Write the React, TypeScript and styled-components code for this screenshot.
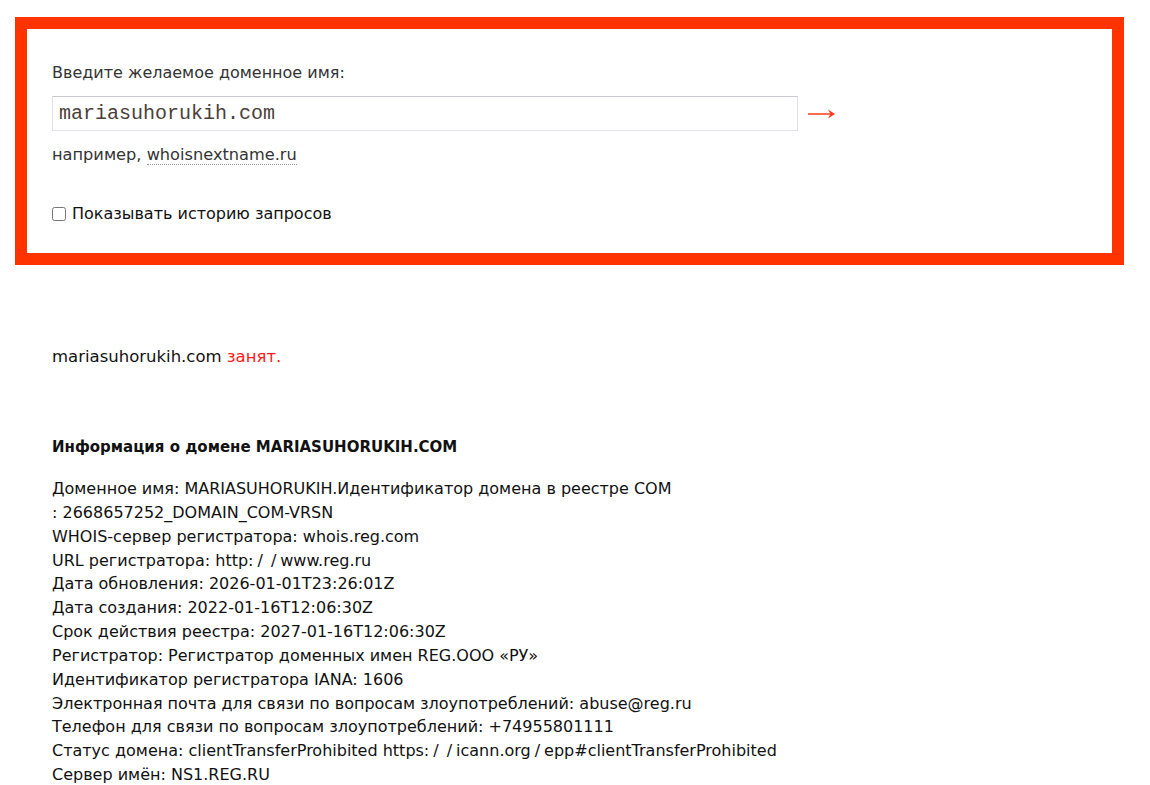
import React from "react";
import styled, { createGlobalStyle } from "styled-components";

const Global = createGlobalStyle`
  html, body { margin: 0; padding: 0; background: #fff; }
  body { font-family: "DejaVu Sans", Verdana, sans-serif; color: #1a1a1a; }
`;

const Page = styled.div`
  padding: 17px 26px 0 15px;
`;

const SearchBox = styled.form`
  border: 12px solid #ff3300;
  padding: 34px 25px 29px 25px;
  display: flex;
  flex-direction: column;
`;

const Label = styled.label`
  font-size: 16px;
  line-height: 20px;
  color: #333;
  margin-bottom: 13px;
`;

const InputRow = styled.div`
  display: flex;
  align-items: center;
  gap: 10px;
`;

const DomainInput = styled.input`
  width: 746px;
  height: 35px;
  box-sizing: border-box;
  border: 1px solid #e2e2ea;
  border-top-color: #c9c9d2;
  padding: 0 6px;
  font-family: "Liberation Mono", "Courier New", monospace;
  font-size: 20px;
  color: #4a4038;
  outline: none;
`;

const Go = styled.button`
  border: none;
  background: none;
  padding: 0;
  display: flex;
  align-items: center;
  cursor: pointer;
`;

const Example = styled.div`
  font-size: 16.2px;
  line-height: 20px;
  color: #333;
  margin-top: 14px;
`;

const ExampleLink = styled.span`
  border-bottom: 1px dotted #999;
`;

const HistoryRow = styled.label`
  display: flex;
  align-items: center;
  gap: 6px;
  margin-top: 39px;
  font-size: 16px;
  line-height: 20px;
  color: #111;
`;

const Check = styled.input`
  margin: 0;
  width: 14px;
  height: 14px;
`;

const Result = styled.div`
  padding: 0 37px;
`;

const Status = styled.p`
  margin: 80px 0 0;
  font-size: 16.5px;
  line-height: 24px;
  color: #111;
`;

const Busy = styled.span`
  color: #ff1a1a;
`;

const Heading = styled.h3`
  margin: 66px 0 0;
  font-size: 15px;
  line-height: 24px;
  font-weight: bold;
  color: #111;
`;

const Info = styled.div`
  margin-top: 18px;
  font-size: 16px;
  line-height: 23.85px;
  color: #111;
`;

const Line = styled.div`
  white-space: nowrap;
`;

const Slash = styled.span`
  padding: 0 4px;
`;

const lines = [
  "Доменное имя: MARIASUHORUKIH.Идентификатор домена в реестре COM",
  ": 2668657252_DOMAIN_COM-VRSN",
  "WHOIS-сервер регистратора: whois.reg.com",
  "URL регистратора: http://www.reg.ru",
  "Дата обновления: 2026-01-01T23:26:01Z",
  "Дата создания: 2022-01-16T12:06:30Z",
  "Срок действия реестра: 2027-01-16T12:06:30Z",
  "Регистратор: Регистратор доменных имен REG.ООО «РУ»",
  "Идентификатор регистратора IANA: 1606",
  "Электронная почта для связи по вопросам злоупотреблений: abuse@reg.ru",
  "Телефон для связи по вопросам злоупотреблений: +74955801111",
  "Статус домена: clientTransferProhibited https://icann.org/epp#clientTransferProhibited",
  "Сервер имён: NS1.REG.RU",
];

const renderLine = (text: string) => {
  const parts = text.split("/");
  return parts.map((p, i) => (
    <React.Fragment key={i}>
      {p}
      {i < parts.length - 1 && <Slash>/</Slash>}
    </React.Fragment>
  ));
};

const Arrow = () => (
  <svg width="28" height="12" viewBox="0 0 28 12">
    <line x1="0" y1="6" x2="24" y2="6" stroke="#ff4a2a" strokeWidth="1.6" />
    <path d="M20 1.5 L27 6 L20 10.5 L22.5 6 Z" fill="#ff3a1a" />
  </svg>
);

export default function App() {
  return (
    <>
      <Global />
      <Page>
        <SearchBox onSubmit={(e) => e.preventDefault()}>
          <Label>Введите желаемое доменное имя:</Label>
          <InputRow>
            <DomainInput defaultValue="mariasuhorukih.com" />
            <Go type="submit" aria-label="Проверить">
              <Arrow />
            </Go>
          </InputRow>
          <Example>
            например, <ExampleLink>whoisnextname.ru</ExampleLink>
          </Example>
          <HistoryRow>
            <Check type="checkbox" />
            Показывать историю запросов
          </HistoryRow>
        </SearchBox>
        <Result>
          <Status>
            mariasuhorukih.com <Busy>занят.</Busy>
          </Status>
          <Heading>Информация о домене MARIASUHORUKIH.COM</Heading>
          <Info>
            {lines.map((l) => (
              <Line key={l}>{renderLine(l)}</Line>
            ))}
          </Info>
        </Result>
      </Page>
    </>
  );
}
